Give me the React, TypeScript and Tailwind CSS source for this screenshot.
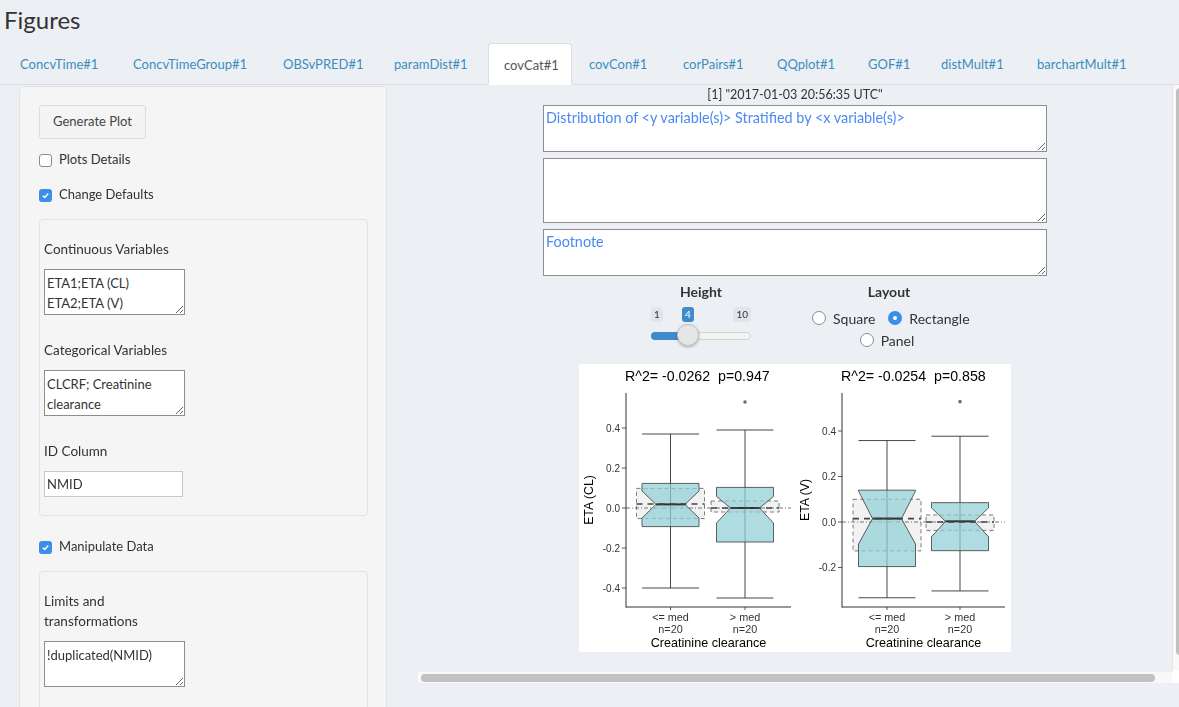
import React from "react";

const tabs = [
  { label: "ConcvTime#1", w: "w-[111px]" },
  { label: "ConcvTimeGroup#1", w: "w-[148px]" },
  { label: "OBSvPRED#1", w: "w-[109px]" },
  { label: "paramDist#1", w: "w-[107px]" },
  { label: "covCat#1", w: "w-[84px]", active: true },
  { label: "covCon#1", w: "w-[92px]" },
  { label: "corPairs#1", w: "w-[92px]" },
  { label: "QQplot#1", w: "w-[89px]" },
  { label: "GOF#1", w: "w-[71px]" },
  { label: "distMult#1", w: "w-[94px]" },
  { label: "barchartMult#1", w: "w-[120px]" },
];

function Check({ on, label }: { on?: boolean; label: string }) {
  return (
    <div className="flex items-center h-[20px] text-[13px] text-[#333]">
      {on ? (
        <span className="w-[13px] h-[13px] rounded-[3px] bg-[#3b8eea] flex items-center justify-center">
          <svg width="9" height="9" viewBox="0 0 10 10">
            <path d="M2 5.2 L4.2 7.3 L8 2.8" fill="none" stroke="white" strokeWidth="1.6" />
          </svg>
        </span>
      ) : (
        <span className="w-[13px] h-[13px] rounded-[3px] bg-white border border-[#8a8a8a]" />
      )}
      <span className="ml-[7px]">{label}</span>
    </div>
  );
}

function Radio({ on, label }: { on?: boolean; label: string }) {
  return (
    <div className="flex items-center h-[20px] text-[14px] text-[#333]">
      {on ? (
        <span className="w-[14px] h-[14px] rounded-full bg-[#3b8eea] flex items-center justify-center">
          <span className="w-[4px] h-[4px] rounded-full bg-white" />
        </span>
      ) : (
        <span className="w-[14px] h-[14px] rounded-full bg-white border border-[#8a8a8a]" />
      )}
      <span className="ml-[7px]">{label}</span>
    </div>
  );
}

function SideArea({ value }: { value: string }) {
  return (
    <textarea
      readOnly
      defaultValue={value}
      className="block w-[141px] h-[46px] bg-white border border-[#8e8e8e] px-[2px] py-[3px] text-[13px] leading-[20px] text-[#333] outline-none"
    />
  );
}

type Grp = {
  cx: number; top: number; q3: number; nu: number; med: number; nl: number;
  q1: number; bot: number; d3: number; dm: number; d1: number; out?: number;
};

function Panel({ x0, x1, y, ticks, groups, title, ylab }: {
  x0: number; x1: number; y: (v: number) => number; ticks: number[];
  groups: Grp[]; title: string; ylab: string;
}) {
  const hw = 28.5, dw = 34, nw = 14.5;
  const f = "Liberation Sans, Arial, sans-serif";
  return (
    <g fontFamily={f}>
      <text x={x0 - 1} y={17} fontSize="14.2" fill="#000" style={{ whiteSpace: "pre" }}>{title}</text>
      <text transform={`translate(${x0 - 33},136) rotate(-90)`} fontSize="12.3" fill="#000" textAnchor="middle">{ylab}</text>
      {ticks.map((t) => (
        <g key={t}>
          <line x1={x0 - 4} x2={x0} y1={y(t)} y2={y(t)} stroke="#333" strokeWidth="0.8" />
          <text x={x0 - 6} y={y(t) + 3.5} fontSize="10" fill="#333" textAnchor="end">{t === 0 ? "0.0" : t.toFixed(1)}</text>
        </g>
      ))}
      {groups.map((g, i) => (
        <rect key={"d" + i} x={g.cx - dw} y={y(g.d3)} width={2 * dw} height={y(g.d1) - y(g.d3)} fill="#f2f2f2" stroke="#6e6e6e" strokeWidth="0.9" strokeDasharray="4 3" />
      ))}
      {groups.map((g, i) => (
        <g key={"w" + i} stroke="#333" strokeWidth="0.9">
          <line x1={g.cx} x2={g.cx} y1={y(g.top)} y2={y(g.bot)} />
          <line x1={g.cx - hw} x2={g.cx + hw} y1={y(g.top)} y2={y(g.top)} />
          <line x1={g.cx - hw} x2={g.cx + hw} y1={y(g.bot)} y2={y(g.bot)} />
        </g>
      ))}
      <line x1={x0} x2={x1} y1={y(0)} y2={y(0)} stroke="#555" strokeWidth="0.8" strokeDasharray="4 2 1 2" />
      {groups.map((g, i) => {
        const L = g.cx - hw, R = g.cx + hw;
        const pts = [
          [L, y(g.q3)], [R, y(g.q3)], [R, y(g.nu)], [g.cx + nw, y(g.med)], [R, y(g.nl)],
          [R, y(g.q1)], [L, y(g.q1)], [L, y(g.nl)], [g.cx - nw, y(g.med)], [L, y(g.nu)],
        ].map((p) => p.join(",")).join(" ");
        return (
          <g key={"b" + i}>
            <polygon points={pts} fill="#8fcfd4" fillOpacity="0.72" stroke="#3a3a3a" strokeWidth="0.8" />
            <line x1={g.cx - nw} x2={g.cx + nw} y1={y(g.med)} y2={y(g.med)} stroke="#333" strokeWidth="2" />
            <line x1={g.cx - dw} x2={g.cx + dw} y1={y(g.dm)} y2={y(g.dm)} stroke="#444" strokeWidth="1.7" strokeDasharray="6 5" />
            {g.out !== undefined && <circle cx={g.cx} cy={y(g.out)} r="1.8" fill="#6e6e6e" />}
            <line x1={g.cx} x2={g.cx} y1={243} y2={246} stroke="#333" strokeWidth="0.8" />
            <text x={g.cx} y={257} fontSize="10.8" fill="#333" textAnchor="middle">{i === 0 ? "<= med" : "> med"}</text>
            <text x={g.cx} y={269} fontSize="10.8" fill="#333" textAnchor="middle">n=20</text>
          </g>
        );
      })}
      <line x1={x0} x2={x0} y1={29} y2={243.5} stroke="#333" strokeWidth="1" />
      <line x1={x0} x2={x1} y1={243} y2={243} stroke="#333" strokeWidth="1" />
      <text x={(x0 + x1) / 2} y={283} fontSize="12.6" fill="#000" textAnchor="middle">Creatinine clearance</text>
    </g>
  );
}

function Plot() {
  const yL = (v: number) => 144 - 200 * v;
  const yR = (v: number) => 158 - 227.5 * v;
  return (
    <svg width="432" height="288" viewBox="0 0 432 288" className="block bg-white">
      <Panel
        x0={47} x1={212} y={yL} ticks={[0.4, 0.2, 0, -0.2, -0.4]} title="R^2= -0.0262  p=0.947" ylab="ETA (CL)"
        groups={[
          { cx: 91.5, top: 0.37, q3: 0.123, nu: 0.085, med: 0.018, nl: -0.05, q1: -0.093, bot: -0.4, d3: 0.098, dm: 0.02, d1: -0.053 },
          { cx: 166, top: 0.39, q3: 0.103, nu: 0.058, med: 0, nl: -0.075, q1: -0.17, bot: -0.45, d3: 0.035, dm: 0, d1: -0.02, out: 0.53 },
        ]}
      />
      <Panel
        x0={263} x1={426} y={yR} ticks={[0.4, 0.2, 0, -0.2]} title="R^2= -0.0254  p=0.858" ylab="ETA (V)"
        groups={[
          { cx: 308, top: 0.358, q3: 0.14, nu: 0.136, med: 0.015, nl: -0.097, q1: -0.196, bot: -0.333, d3: 0.1, dm: 0.015, d1: -0.127 },
          { cx: 381, top: 0.377, q3: 0.085, nu: 0.062, med: 0.003, nl: -0.065, q1: -0.126, bot: -0.303, d3: 0.031, dm: 0, d1: -0.037, out: 0.529 },
        ]}
      />
    </svg>
  );
}

export default function App() {
  return (
    <div className="h-[707px] w-full overflow-hidden bg-[#ecf0f5] font-[Lato,sans-serif] text-[#333]">
      <div className="h-[40px] pl-[4px] pt-[4px] text-[24px] leading-[32px] text-[#333]">Figures</div>

      <ul className="mt-[3px] flex h-[42px] pl-[5px] border-b border-[#ddd]">
        {tabs.map((t) => (
          <li
            key={t.label}
            className={`${t.w} mr-[2px] h-[42px] pl-[15px] pt-[11px] text-[13px] leading-[20px] whitespace-nowrap ${
              t.active ? "bg-white border border-[#ddd] border-b-transparent rounded-t-[4px] pl-[14px] text-[#555]" : "text-[#3c8dbc]"
            }`}
          >
            {t.label}
          </li>
        ))}
      </ul>

      <div className="flex">
        <div className="ml-[19px] mt-[1px] w-[368px] h-[640px] bg-[#f5f5f5] border border-[#e3e3e3] rounded-[4px] px-[19px] pt-[18px]">
          <button className="w-[107px] h-[34px] bg-[#f4f4f4] border border-[#ddd] rounded-[3px] text-[13px] text-[#444]">
            Generate Plot
          </button>
          <div className="mt-[11px]"><Check label="Plots Details" /></div>
          <div className="mt-[15px]"><Check on label="Change Defaults" /></div>

          <div className="mt-[14px] w-[329px] bg-[#f5f5f5] border border-[#e3e3e3] rounded-[4px] px-[4px] pt-[19px] pb-[18px]">
            <div className="h-[20px] leading-[20px] text-[13.5px] mb-[10px]">Continuous Variables</div>
            <SideArea value={"ETA1;ETA (CL)\nETA2;ETA (V)"} />
            <div className="mt-[25px] h-[20px] leading-[20px] text-[13.5px] mb-[10px]">Categorical Variables</div>
            <SideArea value={"CLCRF; Creatinine clearance"} />
            <div className="mt-[25px] h-[20px] leading-[20px] text-[13.5px] mb-[10px]">ID Column</div>
            <input
              readOnly
              defaultValue="NMID"
              className="block w-[139px] h-[26px] bg-white border border-[#c8c8c8] px-[2px] text-[13px] text-[#333] outline-none"
            />
          </div>

          <div className="mt-[21px]"><Check on label="Manipulate Data" /></div>

          <div className="mt-[14px] w-[329px] h-[200px] bg-[#f5f5f5] border border-[#e3e3e3] rounded-[4px] px-[4px] pt-[19px]">
            <div className="w-[120px] leading-[20px] text-[13.5px] mb-[10px]">Limits and transformations</div>
            <SideArea value={"!duplicated(NMID)"} />
          </div>
        </div>

        <div className="ml-[31px] flex flex-col">
          <div className="flex">
            <div className="w-[754px] h-[586px] flex flex-col items-center pt-[1px]">
              <div className="h-[18px] text-[12.5px] leading-[18px] text-[#333]">[1] "2017-01-03 20:56:35 UTC"</div>
              <textarea
                readOnly
                defaultValue="Distribution of <y variable(s)> Stratified by <x variable(s)>"
                className="mt-[1px] block w-[504px] h-[47px] bg-white border border-[#8e8e8e] p-[2px] text-[14.4px] leading-[20px] text-[#4a89f3] outline-none"
              />
              <textarea
                readOnly
                defaultValue=""
                className="mt-[6px] block w-[504px] h-[65px] bg-white border border-[#8e8e8e] p-[2px] text-[14.4px] leading-[20px] text-[#4a89f3] outline-none"
              />
              <textarea
                readOnly
                defaultValue="Footnote"
                className="mt-[6px] block w-[504px] h-[47px] bg-white border border-[#8e8e8e] p-[2px] text-[14.4px] leading-[20px] text-[#4a89f3] outline-none"
              />

              <div className="mt-[6px] w-[504px] flex pl-[108px]">
                <div className="w-[100px]">
                  <div className="h-[20px] text-center text-[14px] font-bold leading-[20px]">Height</div>
                  <div className="relative h-[48px]">
                    <span className="absolute left-0 top-[5px] h-[15px] px-[3px] rounded-[3px] bg-[#e1e4e9] text-[10px] leading-[15px] text-[#333]">1</span>
                    <span className="absolute left-[31px] top-[5px] h-[15px] px-[3px] rounded-[3px] bg-[#428bca] text-[10px] leading-[15px] text-white">4</span>
                    <span className="absolute right-0 top-[5px] h-[15px] px-[3px] rounded-[3px] bg-[#e1e4e9] text-[10px] leading-[15px] text-[#333]">10</span>
                    <div className="absolute left-0 right-0 top-[30px] h-[8px] rounded-full bg-[#f3f3f3] border border-[#d3d3d3]" />
                    <div className="absolute left-0 w-[37px] top-[30px] h-[8px] rounded-l-full bg-[#428bca]" />
                    <div className="absolute left-[26px] top-[22px] w-[22px] h-[22px] rounded-full bg-[#e6e6e6] border border-[#c4c4c4] shadow-[0_1px_3px_rgba(0,0,0,0.3)]" />
                  </div>
                </div>
                <div className="ml-[60px] w-[156px]">
                  <div className="h-[20px] text-center text-[14px] font-bold leading-[20px]">Layout</div>
                  <div className="mt-[6px] flex pl-[1px] gap-[13px]">
                    <Radio label="Square" />
                    <Radio on label="Rectangle" />
                  </div>
                  <div className="mt-[2px] flex justify-center pr-[4px]">
                    <Radio label="Panel" />
                  </div>
                </div>
              </div>

              <div className="mt-[14px]">
                <Plot />
              </div>
            </div>
            <div className="w-[7px] h-[586px] bg-[#f9f9f9] border-l border-[#e3e3e3] pl-[3px] pt-[3px]">
              <div className="w-[8px] h-[567px] rounded-full bg-[#c1c1c1]" />
            </div>
          </div>
          <div className="flex h-[12px]">
            <div className="w-[754px] bg-[#f9f9f9] border-t border-[#ececec] pl-[3px] pt-[2px]">
              <div className="w-[734px] h-[8px] rounded-full bg-[#c1c1c1]" />
            </div>
            <div className="w-[7px] bg-white" />
          </div>
        </div>
      </div>
    </div>
  );
}
